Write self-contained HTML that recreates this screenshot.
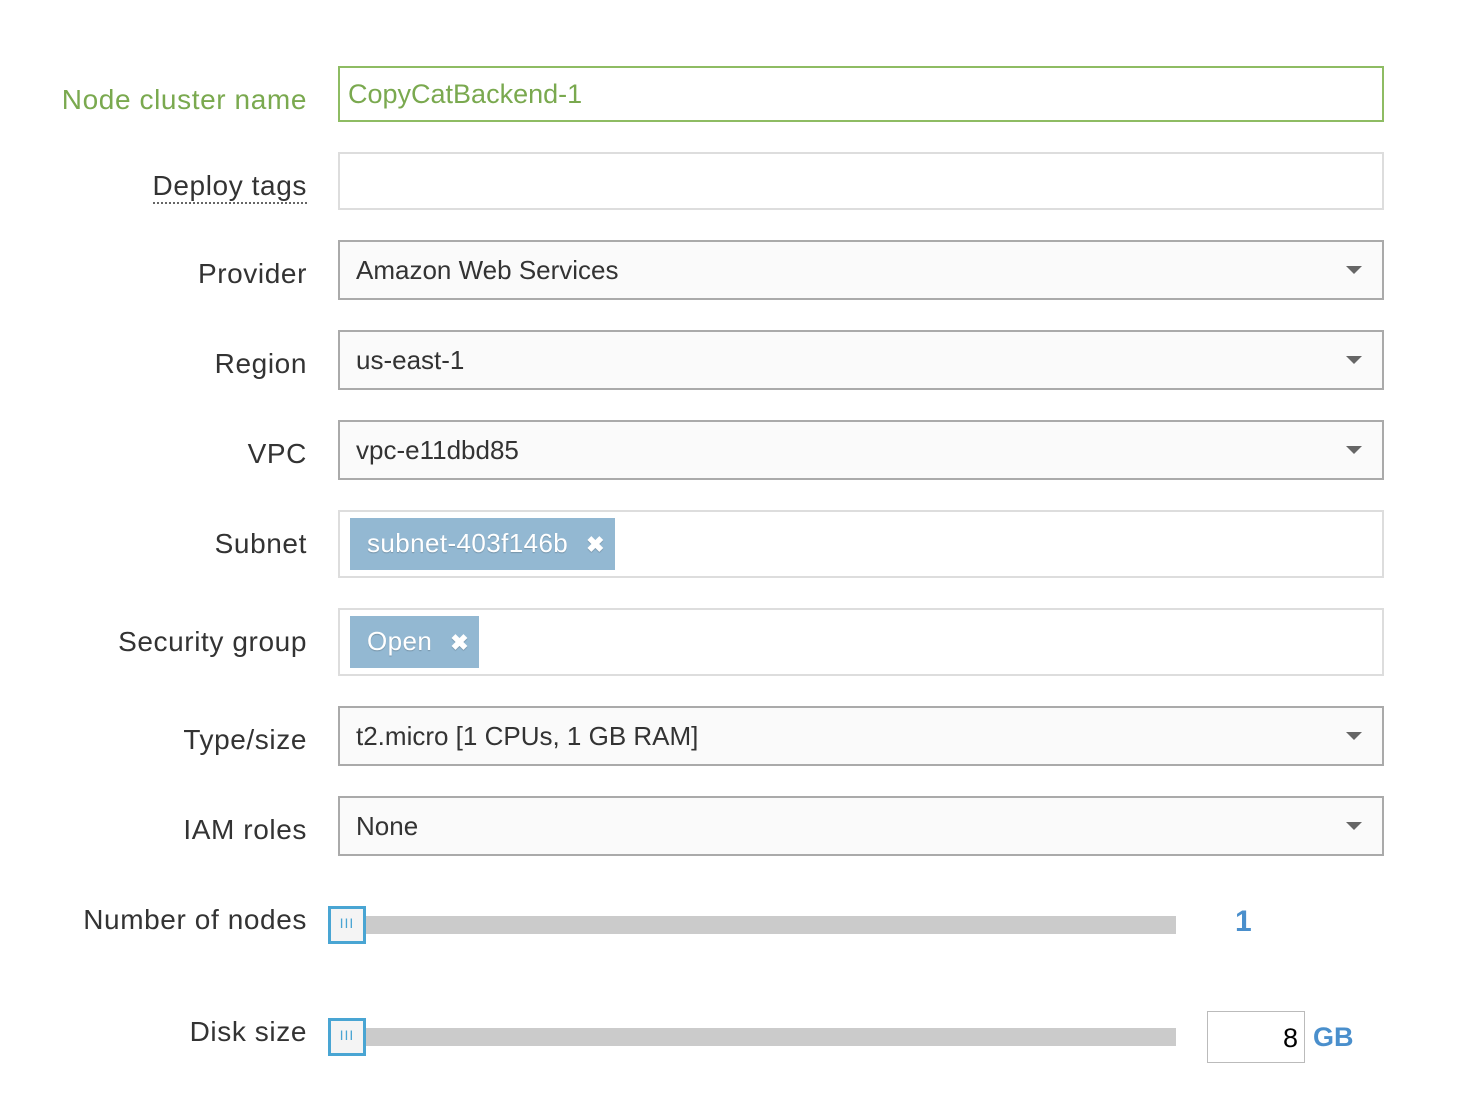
<!DOCTYPE html>
<html><head><style>
body{margin:0;width:1462px;height:1110px;background:#fff;font-family:"Liberation Sans",sans-serif;position:relative;overflow:hidden}
.l{position:absolute;right:1155px;font-size:28px;letter-spacing:0.6px;color:#333;white-space:nowrap}
.b{position:absolute;left:338px;width:1046px;box-sizing:border-box}
.sel{border:2px solid #aaa;background:#fafafa;font-size:26px;color:#333;padding-left:16px;display:flex;align-items:center;height:60px}
.sel:after{content:"";position:absolute;right:20px;top:24px;border-left:8px solid transparent;border-right:8px solid transparent;border-top:8px solid #666}
.tag{position:absolute;left:10px;top:6px;height:52px;background:#93b8d2;color:#fff;font-size:26px;letter-spacing:0.4px;line-height:50px;padding:0 10px 0 17px;text-shadow:0 1px 1px rgba(0,0,0,.2)}
.tag b{margin-left:18px;font-size:22px}
.track{position:absolute;left:365px;width:811px;height:18px;background:#cbcbcb}
.h{position:absolute;left:328px;width:38px;height:38px;box-sizing:border-box;border:3px solid #49a5d3;background:#f4f4f4;text-align:center;line-height:28px;color:#49a5d3;font-size:14px;letter-spacing:1px}
</style></head><body>
<div class="l" style="top:84px;color:#7aa94f">Node cluster name</div>
<div class="b" style="top:66px;height:56px;border:2px solid #8ebc63;font-size:27px;color:#7aa94f;padding-left:8px;line-height:52px">CopyCatBackend-1</div>
<div class="l" style="top:170px;border-bottom:2px dotted #666;line-height:32px">Deploy tags</div>
<div class="b" style="top:152px;height:58px;border:2px solid #ddd"></div>
<div class="l" style="top:258px">Provider</div>
<div class="b sel" style="top:240px">Amazon Web Services</div>
<div class="l" style="top:348px">Region</div>
<div class="b sel" style="top:330px">us-east-1</div>
<div class="l" style="top:438px">VPC</div>
<div class="b sel" style="top:420px">vpc-e11dbd85</div>
<div class="l" style="top:528px">Subnet</div>
<div class="b" style="top:510px;height:68px;border:2px solid #ddd"><div class="tag" style="left:10px">subnet-403f146b<b>✖</b></div></div>
<div class="l" style="top:626px">Security group</div>
<div class="b" style="top:608px;height:68px;border:2px solid #ddd"><div class="tag">Open<b>✖</b></div></div>
<div class="l" style="top:724px">Type/size</div>
<div class="b sel" style="top:706px">t2.micro [1 CPUs, 1 GB RAM]</div>
<div class="l" style="top:814px">IAM roles</div>
<div class="b sel" style="top:796px">None</div>
<div class="l" style="top:904px">Number of nodes</div>
<div class="track" style="top:916px"></div>
<div class="h" style="top:906px">III</div>
<div style="position:absolute;left:1235px;top:905px;font-size:30px;font-weight:bold;color:#4a8fcc">1</div>
<div class="l" style="top:1016px">Disk size</div>
<div class="track" style="top:1028px"></div>
<div class="h" style="top:1018px">III</div>
<div style="position:absolute;left:1207px;top:1011px;width:98px;height:52px;box-sizing:border-box;border:1px solid #bbb;text-align:right;padding-right:6px;font-size:27px;line-height:52px;color:#000">8</div>
<div style="position:absolute;left:1313px;top:1022px;font-size:27px;font-weight:bold;color:#4a8fcc">GB</div>
</body></html>
